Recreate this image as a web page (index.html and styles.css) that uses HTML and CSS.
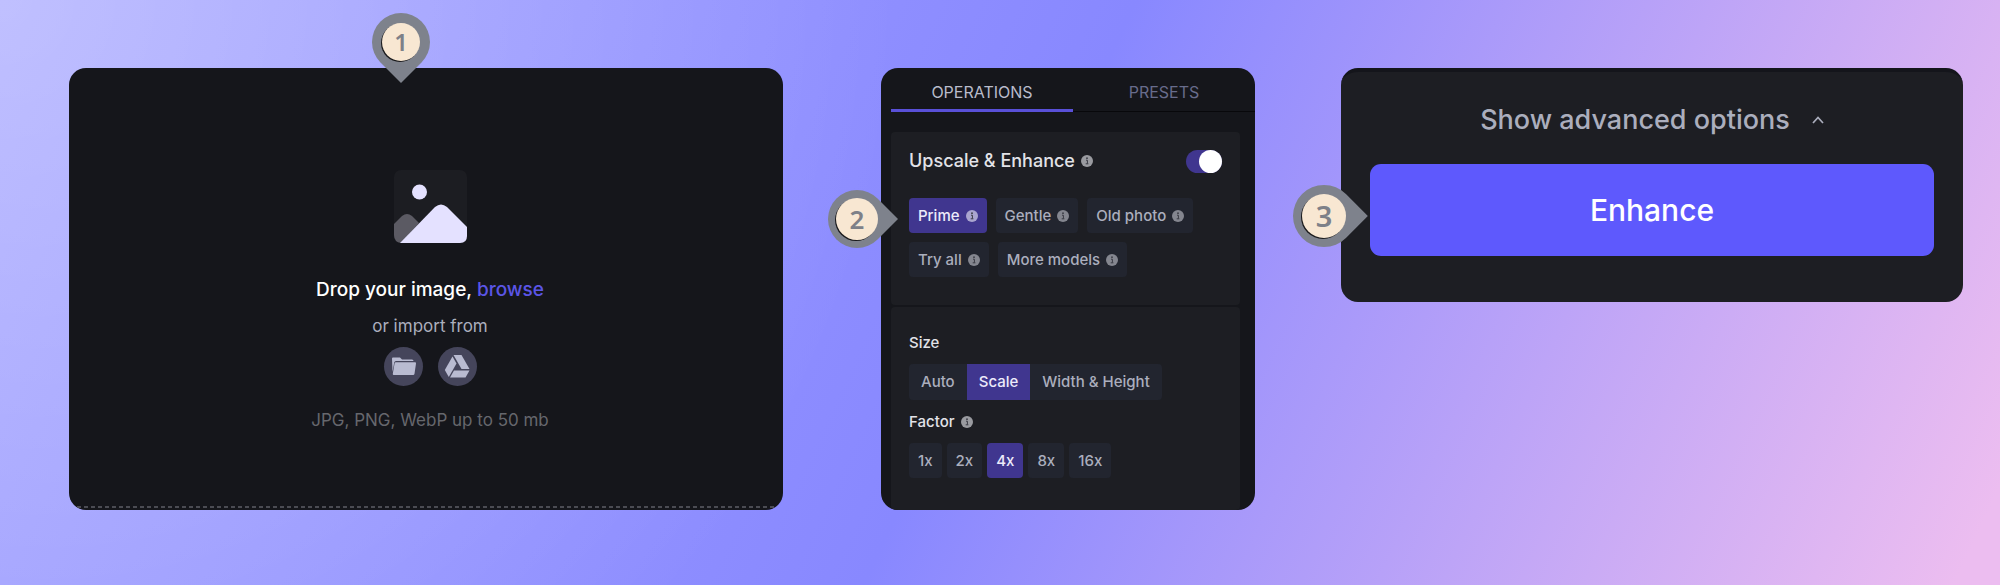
FILE: index.html
```
<!DOCTYPE html>
<html lang="en">

<head>
  <meta charset="UTF-8">
  <meta name="viewport" content="width=device-width, initial-scale=1.0">
  <title>Upscale &amp; Enhance</title>
  <link rel="stylesheet" href="styles.css">
</head>

<body>

  <!-- shared info icon -->
  <svg class="sprite" aria-hidden="true">
    <symbol id="info" viewBox="0 0 12 12">
      <circle cx="6" cy="6" r="6" fill="currentColor" />
      <circle cx="6" cy="3.2" r="0.9" fill="#3a3b44" />
      <path d="M5 5.2h1.400v3.400M4.700 8.800h2.700" fill="none" stroke="#3a3b44" stroke-width="1" />
    </symbol>
  </svg>

  <main class="steps">

    <section class="step step-upload">
      <div class="panel upload">
        <svg class="picture" viewBox="0 0 73 73" aria-hidden="true">
          <rect width="73" height="73" rx="7" fill="#1c1d22" />
          <path d="M0 54 8 46Q13 42 18 46L25 53 7 73Q0 72 0 65Z" fill="#5b5a63" />
          <path d="M6 73 41 37Q47 32 53 37L73 57V66Q73 73 66 73Z" fill="#e4e1ff" />
          <circle cx="25.500" cy="22" r="7.500" fill="#e4e1ff" />
        </svg>
        <p class="drop">Drop your image, <a href="#">browse</a></p>
        <p class="import">or import from</p>
        <div class="sources">
          <button class="source" aria-label="Folder">
            <svg viewBox="0 0 39 39" aria-hidden="true">
              <path d="M8 11.500Q8 10.500 9 10.500H16L18 12.500H28Q29.500 12.500 29.500 14H12Q10.500 14 10.200 15.500L8.500 25Z" fill="#b9bbd1" />
              <path d="M11.800 15.200H31Q32.200 15.200 32 16.400L30.500 26.800Q30.300 28 29.100 28H9.800Q8.600 28 8.800 26.800L10.600 16.300Q10.800 15.200 11.800 15.200Z" fill="#b9bbd1" />
            </svg>
          </button>
          <button class="source" aria-label="Google Drive">
            <svg viewBox="0 0 39 39" aria-hidden="true">
              <path d="M15.500 8H23.500L31.500 22H23.500Z" fill="#b9bbd1" />
              <path d="M14.500 9.500 18.500 16.500 10.800 30 6.800 23Z" fill="#b9bbd1" />
              <path d="M16 23.500H31.500L27.500 30.500H12Z" fill="#b9bbd1" />
            </svg>
          </button>
        </div>
        <p class="formats">JPG, PNG, WebP up to 50 mb</p>
        <div class="dashes"></div>
      </div>
      <span class="pin pin-down"><span>1</span></span>
    </section>

    <section class="step step-options">
      <div class="panel options">
        <div class="tabs" role="tablist">
          <button class="tab active" role="tab" aria-selected="true">OPERATIONS</button>
          <button class="tab" role="tab" aria-selected="false">PRESETS</button>
        </div>

        <div class="card">
          <div class="card-title">
            <label for="upscale">Upscale &amp; Enhance</label>
            <svg class="info"><use href="#info" /></svg>
            <input class="toggle" type="checkbox" id="upscale" checked>
          </div>
          <div class="chips">
            <button class="chip active">Prime <svg class="info"><use href="#info" /></svg></button>
            <button class="chip">Gentle <svg class="info"><use href="#info" /></svg></button>
            <button class="chip">Old photo <svg class="info"><use href="#info" /></svg></button>
            <button class="chip">Try all <svg class="info"><use href="#info" /></svg></button>
            <button class="chip">More models <svg class="info"><use href="#info" /></svg></button>
          </div>
        </div>

        <div class="card card-size">
          <h3>Size</h3>
          <div class="segments">
            <button class="segment">Auto</button>
            <button class="segment active">Scale</button>
            <button class="segment">Width &amp; Height</button>
          </div>
          <h3>Factor <svg class="info"><use href="#info" /></svg></h3>
          <div class="factors">
            <button class="chip">1x</button>
            <button class="chip">2x</button>
            <button class="chip active">4x</button>
            <button class="chip">8x</button>
            <button class="chip">16x</button>
          </div>
        </div>
      </div>
      <span class="pin pin-right"><span>2</span></span>
    </section>

    <section class="step step-enhance">
      <div class="panel enhance">
        <button class="advanced">
          Show advanced options
          <svg class="chevron" viewBox="0 0 12 8" aria-hidden="true">
            <path d="M1 7 6 1.500 11 7" fill="none" stroke="currentColor" stroke-width="1.700" />
          </svg>
        </button>
        <button class="submit">Enhance</button>
      </div>
      <span class="pin pin-right pin-large"><span>3</span></span>
    </section>

  </main>

</body>

</html>
```
FILE: styles.css
```
* {
  box-sizing: border-box;
  margin: 0;
  padding: 0;
}

body {
  min-height: 100vh;
  font-family: Inter, "Liberation Sans", sans-serif;
  font-size: 15px;
  font-weight: 500;
  line-height: 20px;
  color: #abaebd;
  background:
    radial-gradient(circle at 0 0, rgba(255, 255, 255, 0.3), transparent 900px),
    linear-gradient(115deg, #a5a5ff 0%, #8888ff 50%, #ecbdf0 98%);
}

button {
  border: 0;
  font: inherit;
  color: inherit;
  background: transparent;
  cursor: pointer;
}

.sprite {
  position: absolute;
  width: 0;
  height: 0;
}

.steps {
  display: flex;
  align-items: flex-start;
  padding: 68px 37px 68px 69px;
}

.step {
  position: relative;
}

.step-upload {
  flex: 714 1 0;
  align-self: stretch;
}

.step-options {
  flex: 374 1 0;
  margin-left: 98px;
}

.step-enhance {
  flex: 622 1 0;
  margin-left: 86px;
}

.panel {
  overflow: hidden;
  border-radius: 17px;
  background: #15161b;
}

/* upload */
.upload {
  display: flex;
  flex-direction: column;
  align-items: center;
  height: 100%;
  padding: 102px 0 2px 8px;
}

.picture {
  width: 73px;
  height: 73px;
}

.drop {
  margin-top: 35px;
  font-size: 19px;
  line-height: 24px;
  color: #fff;
}

.drop a {
  color: #5b55e6;
  text-decoration: none;
}

.import {
  margin-top: 14px;
  font-size: 17px;
  font-weight: 400;
}

.sources {
  display: flex;
  gap: 15px;
  margin-top: 11px;
}

.source {
  width: 39px;
  height: 39px;
  border-radius: 50%;
  background: #45455b;
}

.source svg {
  display: block;
}

.formats {
  margin-top: 24px;
  font-size: 17px;
  font-weight: 400;
  color: #66676d;
}

.dashes {
  align-self: stretch;
  height: 2px;
  margin-top: auto;
  background: repeating-linear-gradient(90deg, #4b4c53 0 4px, transparent 4px 7px);
}

/* options */
.tabs {
  display: flex;
  margin-left: 10px;
}

.tab {
  flex: 1;
  height: 44px;
  padding-top: 5px;
  border-bottom: 1px solid #08080b;
  font-size: 16px;
  font-weight: 400;
  color: #686c8c;
}

.tab.active {
  padding-top: 7px;
  border-bottom: 3px solid #5950d8;
  color: #b9bccb;
}

.card {
  margin: 20px 15px 0 10px;
  padding: 16px 18px 28px;
  border-radius: 4px;
  background: #1d1e23;
}

.card-title {
  display: flex;
  align-items: center;
  height: 26px;
  font-size: 18px;
  color: #e2e3e8;
}

.info {
  width: 12px;
  height: 12px;
  margin-left: 6px;
  color: #9a9ba0;
}

.toggle {
  appearance: none;
  display: flex;
  justify-content: flex-end;
  width: 36px;
  height: 23px;
  margin-left: auto;
  border-radius: 12px;
  background: #40368f;
  cursor: pointer;
}

.toggle::before {
  content: '';
  width: 23px;
  border-radius: 50%;
  background: #fff;
}

.chips {
  display: flex;
  flex-wrap: wrap;
  gap: 9px;
  margin-top: 24px;
}

.chip {
  display: flex;
  align-items: center;
  height: 35px;
  padding: 0 9px;
  border-radius: 4px;
  background: #22252f;
}

.chip .info {
  color: #84868f;
}

.chip.active,
.segment.active {
  color: #eceafa;
  background: #40368f;
}

.chip.active .info {
  color: #aaa5cf;
}

.card-size {
  margin-top: 2px;
  padding: 26px 18px 32px;
}

.card h3 {
  display: flex;
  align-items: center;
  font-size: 15px;
  font-weight: 500;
  color: #e2e3e8;
}

.segments {
  display: flex;
  width: fit-content;
  margin: 11px 0 12px;
  overflow: hidden;
  border-radius: 4px;
  background: #22252f;
}

.segment {
  height: 36px;
  padding: 0 12px;
}

.factors {
  display: flex;
  gap: 5px;
  margin-top: 11px;
}

/* enhance */
.enhance {
  display: flex;
  flex-direction: column;
  padding: 28px 29px 46px;
  border-top: 4px solid #14151b;
  background: #1d1e23;
}

.advanced {
  display: flex;
  align-items: center;
  justify-content: center;
  font-size: 27px;
  line-height: 40px;
}

.chevron {
  width: 12px;
  height: 8px;
  margin-left: 22px;
}

.submit {
  height: 92px;
  margin-top: 24px;
  border-radius: 11px;
  font-size: 30px;
  color: #fff;
  background: #5e59fd;
}

/* numbered pins */
.pin {
  position: absolute;
  display: flex;
  align-items: center;
  justify-content: center;
  width: 58px;
  height: 58px;
  font-family: "Noto Sans", sans-serif;
  font-size: 26px;
  font-weight: 600;
  color: #7e8088;
}

.pin::before {
  content: '';
  position: absolute;
  inset: 0;
  border-radius: 50% 50% 0 50%;
  background: #7e828c;
  transform: rotate(45deg);
}

.pin span {
  position: relative;
  width: 42px;
  border-radius: 50%;
  line-height: 42px;
  text-align: center;
  background: #f8e7d2;
  box-shadow: -1px 1px 0 #1a1a1c;
}

.pin-down {
  top: -55px;
  left: 46.5%;
  margin-left: -29px;
  font-size: 24px;
}

.pin-down span {
  width: 38px;
  line-height: 38px;
}

.pin-right {
  top: 122px;
  left: -53px;
}

.pin-right::before {
  transform: rotate(-45deg);
}

.pin-large {
  top: 117px;
  left: -48px;
  width: 62px;
  height: 62px;
  font-size: 29px;
}

.pin-large span {
  width: 44px;
  line-height: 44px;
}
```
